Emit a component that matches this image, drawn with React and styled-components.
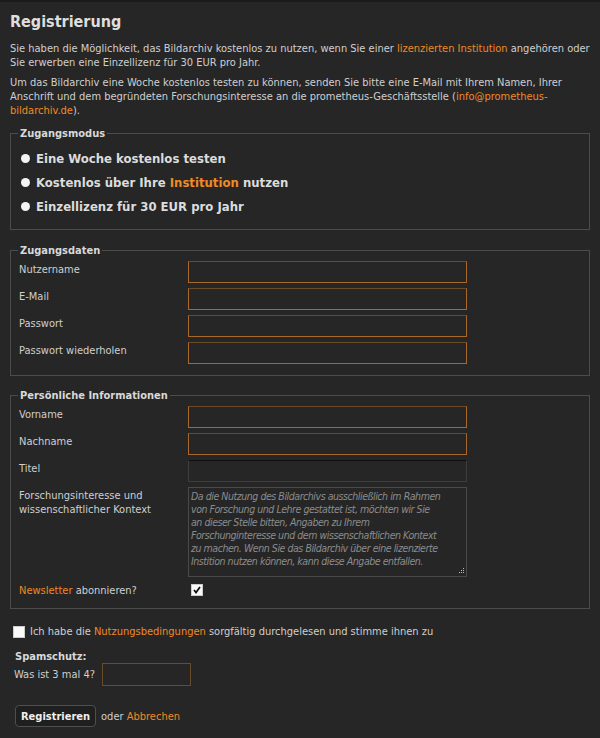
import React from "react";
import styled, { createGlobalStyle } from "styled-components";

const GlobalStyle = createGlobalStyle`
  html, body {
    margin: 0;
    padding: 0;
    background: #262626;
  }
  body {
    font-family: Tahoma, "DejaVu Sans Condensed", "DejaVu Sans", sans-serif;
    font-size: 11px;
    color: #cfcfcf;
    border-top: 2px solid #1b1b1b;
  }
`;

const Page = styled.div`
  padding: 8px 10px 10px 10px;
  box-sizing: border-box;
  width: 600px;
`;

const Title = styled.h2`
  margin: 2px 0 11px 0;
  font-size: 16px;
  font-weight: bold;
  color: #dedede;
`;

const Para = styled.p`
  margin: 0 0 6px 0;
  line-height: 14px;
`;

const Link = styled.a`
  color: #f08a24;
  text-decoration: none;
`;

const Fieldset = styled.fieldset`
  margin: ${(p) => p.$mt || 0}px 0 0 0;
  padding: 2px 8px ${(p) => p.$pb || 10}px 8px;
  border: 1px solid #4c4c4c;
  min-width: 0;
`;

const Legend = styled.legend`
  padding: 0 2px;
  margin-left: -1px;
  font-weight: bold;
  color: #d8d8d8;
`;

const RadioList = styled.div`
  display: flex;
  flex-direction: column;
  gap: 9px;
  padding: 9px 0 4px 2px;
`;

const RadioRow = styled.label`
  display: flex;
  align-items: center;
  gap: 6px;
  font-size: 13px;
  font-weight: bold;
  color: #dcdcdc;
`;

const RadioDot = styled.span`
  width: 9px;
  height: 9px;
  border-radius: 50%;
  background: #f4f4f4;
  flex: none;
`;

const FormGrid = styled.div`
  display: grid;
  grid-template-columns: 169px 279px;
  row-gap: 5px;
  padding-top: 2px;
`;

const Label = styled.div`
  padding-top: 2px;
  line-height: 14px;
`;

const Input = styled.div`
  height: 20px;
  border: 1px solid ${(p) => (p.$plain ? "#3d3d3d" : "#a8682a")};
  border-top-color: ${(p) => (p.$plain ? "#0e0e0e" : "#6b4a2a")};
  background: #262626;
`;

const TextArea = styled.div`
  position: relative;
  border: 1px solid #4a4a4a;
  padding: 2px 2px;
  box-sizing: border-box;
  height: 90px;
  font-size: 10.5px;
  letter-spacing: -0.45px;
  font-style: italic;
  white-space: nowrap;
  color: #8c8c8c;
  line-height: 13px;
  overflow: hidden;
`;

const Grip = styled.svg`
  position: absolute;
  right: 1px;
  bottom: 1px;
`;

const Check = styled.span`
  display: inline-flex;
  align-items: center;
  justify-content: center;
  width: 10px;
  height: 10px;
  background: #fafafa;
  border: 1px solid #ccc;
  margin: ${(p) => p.$m || "0"};
`;

const AgreeRow = styled.div`
  display: flex;
  align-items: center;
  gap: 5px;
  margin: 16px 0 0 3px;
`;

const SpamTitle = styled.div`
  margin: 12px 0 0 5px;
  font-weight: bold;
  color: #d8d8d8;
`;

const SpamRow = styled.div`
  display: flex;
  align-items: center;
  gap: 7px;
  margin: 0 0 0 4px;
`;

const SpamInput = styled.div`
  width: 87px;
  height: 21px;
  border: 1px solid #6b4a2a;
`;

const Actions = styled.div`
  display: flex;
  align-items: center;
  gap: 5px;
  margin: 19px 0 0 5px;
`;

const Button = styled.button`
  font-family: inherit;
  font-size: 11px;
  font-weight: bold;
  color: #efefef;
  background: #1f1f1f;
  border: 1px solid #4e4e4e;
  border-radius: 4px;
  padding: 3px 5px;
  height: 22px;
`;

const textFields = ["Nutzername", "E-Mail", "Passwort", "Passwort wiederholen"];

const hint = [
  "Da die Nutzung des Bildarchivs ausschließlich im Rahmen",
  "von Forschung und Lehre gestattet ist, möchten wir Sie",
  "an dieser Stelle bitten, Angaben zu Ihrem",
  "Forschunginteresse und dem wissenschaftlichen Kontext",
  "zu machen. Wenn Sie das Bildarchiv über eine lizenzierte",
  "Instition nutzen können, kann diese Angabe entfallen.",
];

export default function App() {
  return (
    <Page>
      <GlobalStyle />
      <Title>Registrierung</Title>
      <Para>
        Sie haben die Möglichkeit, das Bildarchiv kostenlos zu nutzen, wenn Sie einer{" "}
        <Link>lizenzierten Institution</Link> angehören oder Sie erwerben eine
        Einzellizenz für 30 EUR pro Jahr.
      </Para>
      <Para>
        Um das Bildarchiv eine Woche kostenlos testen zu können, senden Sie bitte eine
        E-Mail mit Ihrem Namen, Ihrer Anschrift und dem begründeten Forschungsinteresse an
        die prometheus-Geschäftsstelle (<Link>info@prometheus-bildarchiv.de</Link>).
      </Para>

      <Fieldset $mt={9} $pb={11}>
        <Legend>Zugangsmodus</Legend>
        <RadioList>
          <RadioRow>
            <RadioDot />
            Eine Woche kostenlos testen
          </RadioRow>
          <RadioRow>
            <RadioDot />
            <span>
              Kostenlos über Ihre <Link>Institution</Link> nutzen
            </span>
          </RadioRow>
          <RadioRow>
            <RadioDot />
            Einzellizenz für 30 EUR pro Jahr
          </RadioRow>
        </RadioList>
      </Fieldset>

      <Fieldset $mt={14} $pb={11}>
        <Legend>Zugangsdaten</Legend>
        <FormGrid>
          {textFields.map((f) => (
            <React.Fragment key={f}>
              <Label>{f}</Label>
              <Input />
            </React.Fragment>
          ))}
        </FormGrid>
      </Fieldset>

      <Fieldset $mt={13} $pb={10}>
        <Legend>Persönliche Informationen</Legend>
        <FormGrid>
          <Label>Vorname</Label>
          <Input />
          <Label>Nachname</Label>
          <Input />
          <Label>Titel</Label>
          <Input $plain />
          <Label>
            Forschungsinteresse und
            <br />
            wissenschaftlicher Kontext
          </Label>
          <TextArea>
            {hint.map((line) => (
              <div key={line}>{line}</div>
            ))}
            <Grip width="7" height="7" viewBox="0 0 7 7">
              <rect x="5" y="0" width="1" height="1" fill="#bbb" />
              <rect x="3" y="2" width="1" height="1" fill="#bbb" />
              <rect x="5" y="2" width="1" height="1" fill="#bbb" />
              <rect x="1" y="4" width="1" height="1" fill="#bbb" />
              <rect x="3" y="4" width="1" height="1" fill="#bbb" />
              <rect x="5" y="4" width="1" height="1" fill="#bbb" />
            </Grip>
          </TextArea>
          <Label>
            <Link>Newsletter</Link> abonnieren?
          </Label>
          <div>
            <Check $m="2px 0 0 3px">
              <svg width="8" height="8" viewBox="0 0 8 8">
                <path d="M1 4 L3 6.5 L7 1" stroke="#111" strokeWidth="1.8" fill="none" />
              </svg>
            </Check>
          </div>
        </FormGrid>
      </Fieldset>

      <AgreeRow>
        <Check />
        <span>
          Ich habe die <Link>Nutzungsbedingungen</Link> sorgfältig durchgelesen und stimme
          ihnen zu
        </span>
      </AgreeRow>

      <SpamTitle>Spamschutz:</SpamTitle>
      <SpamRow>
        <span>Was ist 3 mal 4?</span>
        <SpamInput />
      </SpamRow>

      <Actions>
        <Button>Registrieren</Button>
        <span>
          oder <Link>Abbrechen</Link>
        </span>
      </Actions>
    </Page>
  );
}
